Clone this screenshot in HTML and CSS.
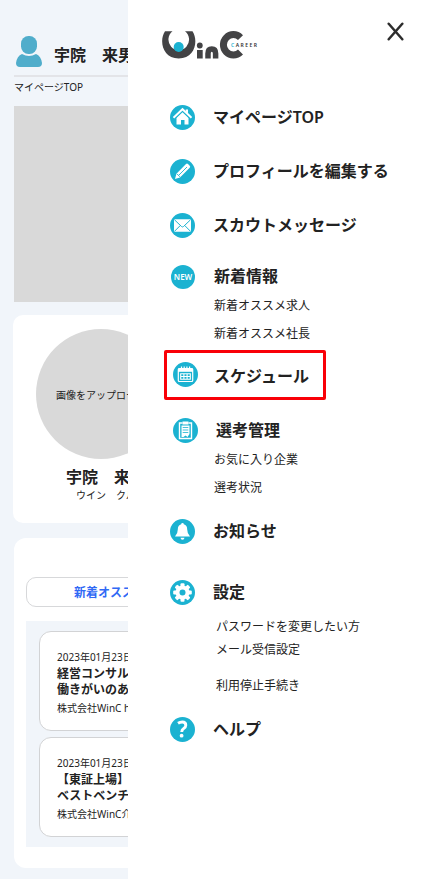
FILE: index.html
```html
<!DOCTYPE html>
<html lang="ja">
<head>
<meta charset="utf-8">
<meta name="viewport" content="width=device-width, initial-scale=1">
<title>WinC CAREER</title>
<link rel="stylesheet" href="styles.css">
</head>
<body>
<div class="app">
  <main class="page">
    <header class="user">
      <svg class="avatar" width="26" height="31" viewBox="0 0 26 31"><rect x="5" y="0" width="16" height="18" rx="7.5"/><path d="M6 18Q13 22 20 18Q25 20 26 27Q26 31 22 31H4Q0 31 0 27Q1 20 6 18Z"/></svg>
      <span class="user-name">宇院　来男</span>
    </header>
    <div class="crumb">マイページTOP</div>
    <div class="banner"></div>
    <section class="profile">
      <div class="photo">画像をアップロード</div>
      <div class="name">宇院　来男</div>
      <div class="kana">ウイン　クルオ</div>
    </section>
    <section class="jobs">
      <div class="tab">新着オススメ求人</div>
      <div class="list">
        <article class="job">
          <p class="small">2023年01月23日</p>
          <h3>経営コンサルタント<br>働きがいのある会社</h3>
          <p class="small">株式会社WinC holdings</p>
        </article>
        <article class="job">
          <p class="small">2023年01月23日</p>
          <h3>【東証上場】<br>ベストベンチャー</h3>
          <p class="small">株式会社WinC介護</p>
        </article>
      </div>
    </section>
  </main>
  <aside class="drawer">
    <div class="top">
      <svg class="logo" width="98" height="30" viewBox="0 0 98 30">
        <path class="ink" d="M3 1.200H10.500A10.300 10.500 0 1 0 23 1.200H30.500C36.500 10 33.500 28.500 16.700 28.500C0 28.500-3 10 3 1.200Z"/>
        <circle class="cyan" cx="16.700" cy="17" r="5"/>
        <circle class="ink" cx="37.800" cy="15.500" r="2.900"/>
        <path class="ink" d="M35 20H40.700V28.500H35Z"/>
        <path class="stroke" d="M46 28.500V23.500Q46 19 49.800 19T53.600 23.500V28.500" stroke-width="5.500"/>
        <path class="stroke" d="M78.500 7.600A10 10.200 0 1 0 78.500 22" stroke-width="7"/>
        <text class="career" x="69" y="17"><tspan class="cyan">C</tspan>AREER</text>
      </svg>
      <svg class="close" width="17" height="19" viewBox="0 0 17 19"><path d="M1.700 1.700L15.300 17.300M15.300 1.700L1.700 17.300"/></svg>
    </div>
    <nav class="menu">
      <a class="item"><svg class="icon" viewBox="0 0 25 25"><circle cx="12.500" cy="12.500" r="12.500"/><path class="w" d="M6.500 13L12.500 7.200L18.500 13V19.500H14.500V15H11V19.500H6.500ZM15.700 4.500H18V8.500L15.700 6.500Z"/><path class="cut" d="M5 13.500L12.500 6.300L20 13.500" stroke-width=".8"/><path class="line" d="M3.500 12.700L12.500 4.200L21.500 12.700" stroke-width="2"/></svg><span>マイページTOP</span></a>
      <a class="item"><svg class="icon" viewBox="0 0 25 25"><circle cx="12.500" cy="12.500" r="12.500"/><path class="w" d="M5 20L6.400 14.700L16 5Q17 4.200 18 5L19.700 6.800Q20.700 7.800 19.700 8.800L10 18.500Z"/><path class="cut" d="M9 16L17 8M7 14.900L9.900 17.800" stroke-width=".9"/></svg><span>プロフィールを編集する</span></a>
      <a class="item"><svg class="icon" viewBox="0 0 25 25"><circle cx="12.500" cy="12.500" r="12.500"/><rect class="w" x="4" y="6.300" width="17" height="12.400" rx="1"/><path class="cut" d="M4.500 6.800L11.500 13.500Q12.500 14.400 13.500 13.500L20.500 6.800M4.500 18.300L10.200 12.600M20.500 18.300L14.800 12.600"/></svg><span>スカウトメッセージ</span></a>
      <a class="item new"><span class="badge">NEW</span><span>新着情報</span></a>
      <a class="sub first">新着オススメ求人</a>
      <a class="sub">新着オススメ社長</a>
      <a class="item current"><svg class="icon" viewBox="0 0 25 25"><circle cx="12.500" cy="12.500" r="12.500"/><rect class="line" x="5.300" y="6.500" width="14.400" height="13" rx="1" stroke-width="1.200"/><path class="w" d="M5 6.500H20V9.800H5Z"/><path class="line" d="M8.500 4.500V8M11.200 4.500V7M13.900 4.500V7M16.600 4.500V8" stroke-width="1.200"/><path class="line" d="M7.700 11.700H17.300V17.300H7.700ZM7.700 14.500H17.300M10.900 11.700V17.300M14.100 11.700V17.300" stroke-width="1.100"/></svg><span>スケジュール</span></a>
      <a class="item selection"><svg class="icon" viewBox="0 0 25 25"><circle cx="12.500" cy="12.500" r="12.500"/><path class="line" d="M9.500 5H6.500V20.500H18.500V5H15.500" stroke-width="1.400"/><rect class="w" x="9.500" y="3.500" width="6" height="3"/><path class="w" d="M8.500 7.500H16.500V16L14.500 19L12.500 17.500L10.500 19H8.500Z"/><path class="cut" d="M9.700 9.500H15.300M9.700 12H15.300M9.700 14.500H15.300" stroke-width=".8"/></svg><span>選考管理</span></a>
      <a class="sub first">お気に入り企業</a>
      <a class="sub">選考状況</a>
      <a class="item news"><svg class="icon" viewBox="0 0 25 25"><circle cx="12.500" cy="12.500" r="12.500"/><path class="w" d="M11.200 5.300Q11.200 4 12.500 4T13.800 5.300Q17.200 6.300 17.200 10.500Q17.200 14.800 20 17.500H5Q7.800 14.800 7.800 10.500Q7.800 6.300 11.200 5.300ZM10.500 18.700H14.500Q14.300 20.800 12.500 20.800T10.500 18.700Z"/></svg><span>お知らせ</span></a>
      <a class="item settings"><svg class="icon" viewBox="0 0 25 25"><circle cx="12.500" cy="12.500" r="12.500"/><g class="w"><circle cx="12.500" cy="12.500" r="7"/><rect x="10.500" y="3.200" width="4" height="18.600" rx="1"/><rect x="10.500" y="3.200" width="4" height="18.600" rx="1" transform="rotate(45 12.500 12.500)"/><rect x="10.500" y="3.200" width="4" height="18.600" rx="1" transform="rotate(90 12.500 12.500)"/><rect x="10.500" y="3.200" width="4" height="18.600" rx="1" transform="rotate(135 12.500 12.500)"/></g><circle cx="12.500" cy="12.500" r="3"/></svg><span>設定</span></a>
      <a class="sub password">パスワードを変更したい方</a>
      <a class="sub mail">メール受信設定</a>
      <a class="sub stop">利用停止手続き</a>
      <a class="item help"><svg class="icon" viewBox="0 0 25 25"><circle cx="12.500" cy="12.500" r="12.500"/><path class="line" d="M8 6.300Q10 5 12.300 5Q15.800 5 15.800 8.200Q15.800 10.200 13.700 11.400Q11.700 12.500 11.700 15" stroke-width="2.900"/><circle class="w" cx="11.600" cy="18.700" r="1.900"/></svg><span>ヘルプ</span></a>
    </nav>
  </aside>
</div>
</body>
</html>
```
FILE: styles.css
```css
* { box-sizing: border-box; }
body {
  margin: 0;
  font-family: "Noto Sans", "Noto Sans CJK JP", sans-serif;
  color: #222;
  background: #fff;
}
h3, p { margin: 0; }
.app { display: flex; height: 879px; overflow: hidden; }

.page {
  width: 128px;
  flex: none;
  overflow: hidden;
  background: #f1f5fa;
  white-space: nowrap;
}
.user {
  display: flex;
  width: 400px;
  height: 77px;
  margin-left: 14px;
  padding: 36px 0 0 2px;
  border-bottom: 2px solid #e3e4e8;
}
.avatar { fill: #50adcb; flex: none; }
.user-name { margin: 7px 0 0 12px; font-size: 16px; line-height: 24px; font-weight: 600; }
.crumb { margin-left: 14px; height: 29px; font-size: 10px; line-height: 21px; }
.banner { width: 400px; height: 196px; margin-left: 14px; background: #d9d9d9; }
.profile {
  width: 402px;
  height: 208px;
  margin: 13px 0 0 13px;
  padding: 14px 0 0 23px;
  border-radius: 10px;
  background: #fff;
}
.photo {
  width: 130px;
  height: 130px;
  padding-left: 20px;
  border-radius: 50%;
  background: #d9d9d9;
  font-size: 10px;
  line-height: 132px;
}
.name { margin: 6px 0 0 30px; font-size: 16px; line-height: 24px; font-weight: 700; }
.kana { margin: -1px 0 0 40px; font-size: 10px; line-height: 14px; }
.jobs {
  width: 400px;
  height: 330px;
  margin: 15px 0 0 14px;
  padding: 39px 12px 0;
  border-radius: 12px;
  background: #fff;
}
.tab {
  height: 30px;
  padding-left: 47px;
  border: 1px solid #d7d8da;
  border-radius: 10px;
  color: #3069f5;
  font-size: 12px;
  line-height: 29px;
  font-weight: 700;
}
.list {
  display: flex;
  flex-direction: column;
  gap: 6px;
  height: 226px;
  margin-top: 14px;
  padding: 10px 13px;
  background: #f1f5fa;
}
.job {
  height: 100px;
  padding: 17px;
  border: 1px solid #d2d3d5;
  border-radius: 12px;
  background: #fff;
}
.job h3 { margin-top: 1px; font-size: 12px; line-height: 16px; font-weight: 700; }
.small { font-size: 10px; line-height: 16px; }
.job h3 + .small { margin-top: 2px; }

.drawer { width: 300px; background: #fff; }
.top {
  display: flex;
  justify-content: space-between;
  align-items: flex-start;
  height: 104px;
  padding: 22px 24px 0 34px;
}
.logo { margin-top: 8px; }
.ink { fill: #434345; }
.cyan { fill: #1bb2d1; }
.stroke { fill: none; stroke: #434345; }
.career { fill: #333; font-size: 5px; font-weight: 600; letter-spacing: 1.5px; }
.close { fill: none; stroke: #2d2d2d; stroke-width: 2.5; stroke-linecap: round; }

.menu { display: flex; flex-direction: column; padding-left: 42px; }
.item {
  display: flex;
  align-items: center;
  height: 26px;
  margin-bottom: 28px;
  font-size: 16px;
  line-height: 24px;
  font-weight: 600;
  white-space: nowrap;
}
.icon { width: 25px; height: 25px; flex: none; margin-right: 18px; fill: #1bb2d1; stroke-width: 1; }
.w { fill: #fff; }
.line { fill: none; stroke: #fff; }
.cut { fill: none; stroke: #1bb2d1; }
.badge {
  width: 24px;
  height: 24px;
  margin: 2px 19px 0 1px;
  border-radius: 50%;
  background: #1bb2d1;
  color: #fff;
  font-size: 8px;
  line-height: 24px;
  text-align: center;
}
.item.new { margin: -3px 0 0; }
.sub { height: 20px; margin: 8px 0 0 44px; font-size: 12px; line-height: 22px; }
.sub.first { margin-top: 6px; }
.item.current {
  width: 162px;
  height: 50px;
  margin: 7px 0 17px -6px;
  padding: 0 0 1px 6px;
  border: 3px solid #f90007;
  border-radius: 2px;
}
.current .icon { margin-right: 16px; }
.item.current > span { padding-top: 2px; }
.item.selection { margin: 0 0 0 3px; }
.selection .icon { margin-right: 18px; }
.item.news { margin: 21px 0 35px; }
.item.settings { margin-bottom: 11px; }
.sub.password { margin: 0 0 0 46px; }
.sub.mail { margin: 3px 0 0 46px; }
.sub.stop { margin: 16px 0 0 46px; }
.item.help { margin: 21px 0 0; }
```
